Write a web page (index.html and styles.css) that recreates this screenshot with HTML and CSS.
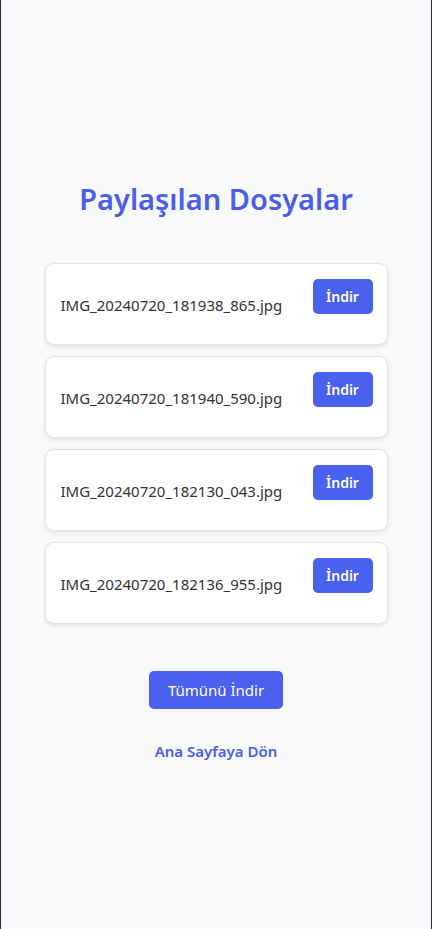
FILE: index.html
```html
<!DOCTYPE html>
<html lang="tr">
<head>
<meta charset="utf-8">
<title>Paylaşılan Dosyalar</title>
<link rel="stylesheet" href="styles.css">
</head>
<body>
<div class="frame">
  <main class="container">
    <h1 class="title">Paylaşılan Dosyalar</h1>
    <ul class="files">
      <li class="file"><span class="name">IMG_20240720_181938_865.jpg</span><a class="btn btn-sm" href="#">İndir</a></li>
      <li class="file"><span class="name">IMG_20240720_181940_590.jpg</span><a class="btn btn-sm" href="#">İndir</a></li>
      <li class="file"><span class="name">IMG_20240720_182130_043.jpg</span><a class="btn btn-sm" href="#">İndir</a></li>
      <li class="file"><span class="name">IMG_20240720_182136_955.jpg</span><a class="btn btn-sm" href="#">İndir</a></li>
    </ul>
    <a class="btn btn-all" href="#">Tümünü İndir</a>
    <a class="home" href="#">Ana Sayfaya Dön</a>
  </main>
</div>
</body>
</html>
```
FILE: styles.css
```css
html, body {
  margin: 0;
  padding: 0;
}
body {
  background: #f8f9fb;
  font-family: "Noto Sans", "Open Sans", sans-serif;
  color: #333;
}
.frame {
  box-sizing: border-box;
  min-height: 929px;
  border-left: 1px solid #2b2e3b;
  border-right: 1px solid #2b2e3b;
  padding-top: 173px;
}
.container {
  width: 343px;
  margin: 0 auto;
  display: flex;
  flex-direction: column;
  align-items: center;
}
.title {
  margin: 0 0 38px;
  font-size: 29px;
  line-height: 52px;
  font-weight: 600;
  color: #4a5ee9;
}
.files {
  list-style: none;
  margin: 0 0 47px;
  padding: 0;
  width: 100%;
  display: flex;
  flex-direction: column;
  gap: 11px;
}
.file {
  box-sizing: border-box;
  height: 82px;
  background: #fff;
  border: 1px solid #e3e4e8;
  border-radius: 9px;
  box-shadow: 0 2px 5px rgba(0, 0, 0, 0.09);
  padding: 15px 14px 15px 15px;
  display: flex;
  justify-content: space-between;
}
.name {
  align-self: center;
  padding-top: 2px;
  font-size: 15px;
  color: #333;
}
.btn {
  background: #4a60ee;
  color: #fff;
  text-decoration: none;
  border-radius: 5px;
}
.btn-sm {
  align-self: flex-start;
  width: 60px;
  height: 35px;
  box-sizing: border-box;
  display: flex;
  align-items: center;
  justify-content: center;
  font-size: 14px;
  font-weight: 600;
}
.btn-all {
  width: 134px;
  height: 38px;
  box-sizing: border-box;
  display: flex;
  align-items: center;
  justify-content: center;
  font-size: 15px;
}
.home {
  margin-top: 32px;
  color: #4a5ee9;
  font-weight: 600;
  font-size: 15px;
  text-decoration: none;
}
```
